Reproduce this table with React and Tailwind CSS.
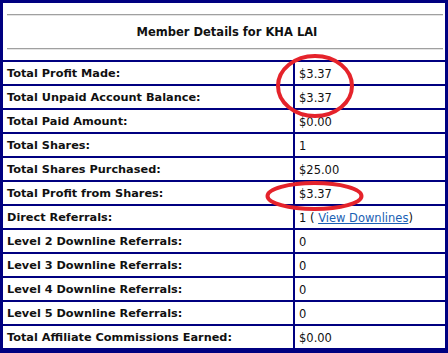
import React from "react";

const rows = [
  ["Total Profit Made:", "$3.37"],
  ["Total Unpaid Account Balance:", "$3.37"],
  ["Total Paid Amount:", "$0.00"],
  ["Total Shares:", "1"],
  ["Total Shares Purchased:", "$25.00"],
  ["Total Profit from Shares:", "$3.37"],
  ["Direct Referrals:", "link"],
  ["Level 2 Downline Referrals:", "0"],
  ["Level 3 Downline Referrals:", "0"],
  ["Level 4 Downline Referrals:", "0"],
  ["Level 5 Downline Referrals:", "0"],
  ["Total Affiliate Commissions Earned:", "$0.00"],
];

export default function App() {
  return (
    <div
      className="relative w-[448px] h-[353px] bg-[#000080] pt-[3px] pl-[3px] pr-[3px] pb-[5px] text-[#111]"
      style={{ fontFamily: '"DejaVu Sans", Verdana, sans-serif' }}
    >
      <div className="flex flex-col gap-[2px]">
        {/* heading cell */}
        <div className="h-[57px] bg-white pl-[4px] pr-[2px] flex flex-col">
          <div className="mt-[11px] h-[2px] border-t border-[#a0a0a0] border-b border-b-[#e4e4e4]" />
          <div className="flex-1 flex items-center justify-center text-[11.5px] font-bold pl-[4px] pt-[1px]">
            Member Details for KHA LAI
          </div>
          <div className="mb-[10px] h-[2px] border-t border-[#a0a0a0] border-b border-b-[#e4e4e4]" />
        </div>

        {/* detail rows */}
        {rows.map(([label, value]) => (
          <div key={label} className="grid grid-cols-[290px_1fr] gap-[2px] h-[22px]">
            <div className="bg-white pl-[4px] pt-[3px] flex items-center text-[11.3px] font-bold">
              {label}
            </div>
            <div className="bg-white pl-[4px] pt-[3px] flex items-center text-[11.5px]">
              {value === "link" ? (
                <span>
                  1 ({" "}
                  <a href="#" className="text-[#1a5fb4] underline">
                    View Downlines
                  </a>
                  )
                </span>
              ) : (
                value
              )}
            </div>
          </div>
        ))}
      </div>

      {/* red highlight rings */}
      <svg
        className="absolute left-0 top-0 pointer-events-none"
        width="448"
        height="353"
        viewBox="0 0 448 353"
      >
        <ellipse cx="315" cy="86" rx="37" ry="30" fill="none" stroke="#e5232b" strokeWidth="4" />
        <ellipse cx="314.5" cy="196" rx="47" ry="13" fill="none" stroke="#e5232b" strokeWidth="4" />
      </svg>
    </div>
  );
}
